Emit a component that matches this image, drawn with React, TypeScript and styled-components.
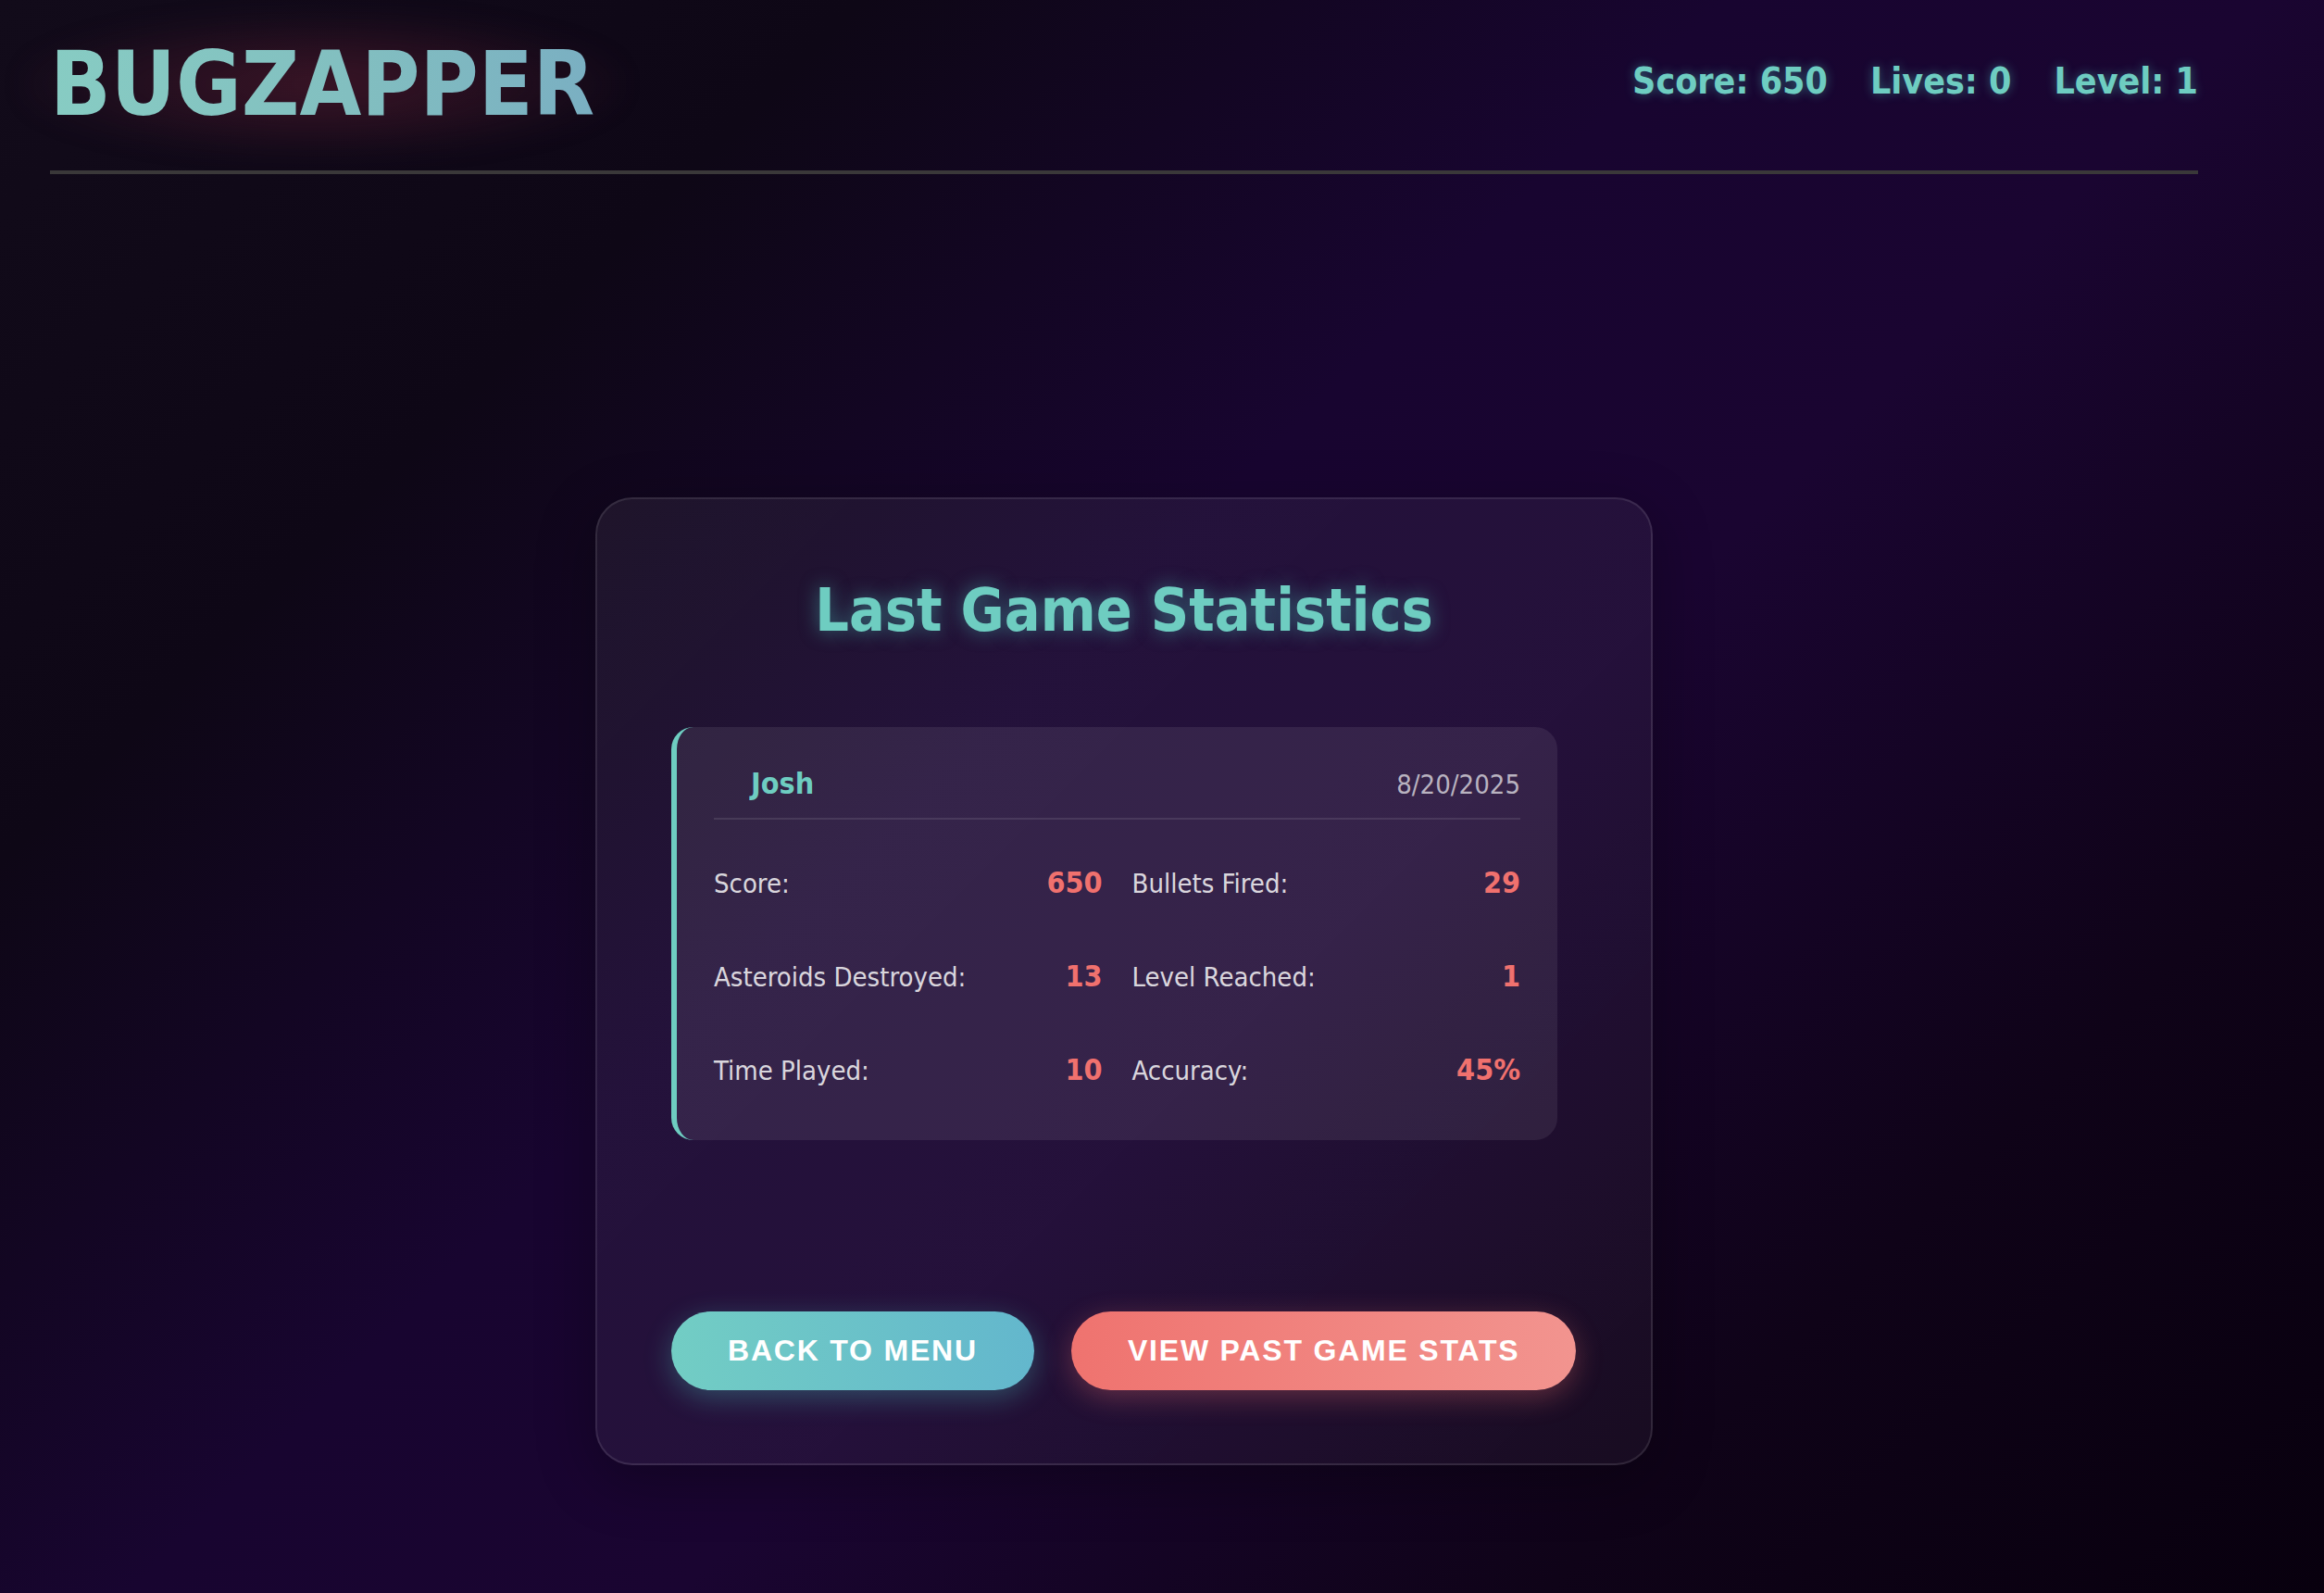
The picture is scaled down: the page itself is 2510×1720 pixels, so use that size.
import React from "react";
import styled, { createGlobalStyle, css } from "styled-components";

const GlobalStyle = createGlobalStyle`
  html, body {
    margin: 0;
    padding: 0;
  }
  body {
    min-height: 1720px;
    background: linear-gradient(
      135deg,
      #120b1a 0%,
      #0e0716 22%,
      #180530 44%,
      #1a0531 58%,
      #0f0318 80%,
      #08000e 100%
    );
    font-family: "DejaVu Sans Condensed", "DejaVu Sans", sans-serif;
    font-stretch: condensed;
    color: #ffffff;
  }
`;

const Page = styled.div`
  width: 2320px;
  margin-left: 54px;
  min-height: 1720px;
`;

const Header = styled.header`
  display: flex;
  align-items: center;
  justify-content: space-between;
  padding: 35px 0 37px;
  border-bottom: 4px solid #3a3839;
`;

const Logo = styled.h1`
  position: relative;
  margin: 0;
  font-size: 96px;
  line-height: 112px;
  font-weight: 700;
  background: linear-gradient(90deg, #87ccc3 0%, #82bfc0 55%, #7aafc2 100%);
  -webkit-background-clip: text;
  background-clip: text;
  -webkit-text-fill-color: transparent;
  color: transparent;

  &::before {
    content: "";
    position: absolute;
    inset: -20px -30px;
    z-index: -1;
    border-radius: 60px;
    background: radial-gradient(
      ellipse at center,
      rgba(110, 35, 55, 0.45) 0%,
      rgba(90, 30, 50, 0.25) 45%,
      rgba(60, 20, 40, 0) 75%
    );
    filter: blur(12px);
  }
`;

const Hud = styled.div`
  display: flex;
  gap: 46px;
  padding-bottom: 7px;
`;

const HudItem = styled.span`
  font-size: 39px;
  font-weight: 700;
  color: #6ecdc1;
  text-shadow: 0 0 12px rgba(78, 205, 196, 0.45);
`;

const Main = styled.main`
  display: flex;
  justify-content: center;
  padding-top: 349px;
`;

const Panel = styled.section`
  width: 1142px;
  box-sizing: border-box;
  padding: 82px 80px 79px;
  border: 2px solid rgba(255, 255, 255, 0.1);
  border-radius: 40px;
  background: linear-gradient(
    135deg,
    rgba(255, 255, 255, 0.06) 0%,
    rgba(255, 255, 255, 0.05) 50%,
    rgba(255, 255, 255, 0.04) 100%
  );
  box-shadow: 0 16px 64px rgba(0, 0, 0, 0.3);
`;

const PanelTitle = styled.h2`
  margin: 0 0 88px;
  text-align: center;
  font-size: 64px;
  line-height: 76px;
  font-weight: 700;
  color: #6ecdc1;
  text-shadow: 0 0 20px rgba(78, 205, 196, 0.5);
`;

const GameCard = styled.article`
  width: 957px;
  box-sizing: border-box;
  padding: 42px 40px 26px;
  border-left: 6px solid #6ecdc1;
  border-radius: 24px;
  background: rgba(255, 255, 255, 0.08);
`;

const CardHeader = styled.div`
  display: flex;
  align-items: baseline;
  justify-content: space-between;
  padding-bottom: 18px;
  border-bottom: 2px solid rgba(255, 255, 255, 0.1);
`;

const PlayerName = styled.span`
  padding-left: 40px;
  font-size: 32px;
  line-height: 38px;
  font-weight: 700;
  color: #6ecdc1;
`;

const GameDate = styled.span`
  font-size: 29px;
  color: rgba(255, 255, 255, 0.66);
`;

const StatGrid = styled.div`
  display: grid;
  grid-template-columns: 1fr 1fr;
  column-gap: 32px;
  margin-top: 18px;
`;

const Stat = styled.div`
  display: flex;
  align-items: baseline;
  justify-content: space-between;
  padding: 32px 0;
  line-height: 1.15;
`;

const StatLabel = styled.span`
  font-size: 29px;
  color: rgba(255, 255, 255, 0.84);
`;

const StatValue = styled.span`
  font-size: 32px;
  font-weight: 700;
  color: #f0716e;
`;

const ButtonRow = styled.div`
  display: flex;
  gap: 40px;
  margin-top: 185px;
`;

const ActionButton = styled.button<{ $variant: "primary" | "secondary" }>`
  flex-shrink: 0;
  white-space: nowrap;
  border: none;
  border-radius: 999px;
  padding: 24px 61px;
  font-family: "Liberation Sans", Arial, sans-serif;
  font-size: 32px;
  line-height: 37px;
  font-weight: 700;
  letter-spacing: 1.8px;
  text-transform: uppercase;
  color: #ffffff;
  cursor: pointer;
  ${({ $variant }) =>
    $variant === "primary"
      ? css`
          background: linear-gradient(90deg, #72cdc4 0%, #63b7cd 100%);
          box-shadow: 0 8px 30px rgba(78, 205, 196, 0.32);
        `
      : css`
          background: linear-gradient(90deg, #ef736f 0%, #f2948f 100%);
          box-shadow: 0 8px 30px rgba(240, 112, 110, 0.32);
        `}
`;

const stats: { label: string; value: string }[] = [
  { label: "Score:", value: "650" },
  { label: "Bullets Fired:", value: "29" },
  { label: "Asteroids Destroyed:", value: "13" },
  { label: "Level Reached:", value: "1" },
  { label: "Time Played:", value: "10" },
  { label: "Accuracy:", value: "45%" },
];

export default function App() {
  return (
    <>
      <GlobalStyle />
      <Page>
        <Header>
          <Logo>BUGZAPPER</Logo>
          <Hud>
            <HudItem>Score: 650</HudItem>
            <HudItem>Lives: 0</HudItem>
            <HudItem>Level: 1</HudItem>
          </Hud>
        </Header>
        <Main>
          <Panel>
            <PanelTitle>Last Game Statistics</PanelTitle>
            <GameCard>
              <CardHeader>
                <PlayerName>Josh</PlayerName>
                <GameDate>8/20/2025</GameDate>
              </CardHeader>
              <StatGrid>
                {stats.map((s) => (
                  <Stat key={s.label}>
                    <StatLabel>{s.label}</StatLabel>
                    <StatValue>{s.value}</StatValue>
                  </Stat>
                ))}
              </StatGrid>
            </GameCard>
            <ButtonRow>
              <ActionButton $variant="primary">Back to Menu</ActionButton>
              <ActionButton $variant="secondary">View Past Game Stats</ActionButton>
            </ButtonRow>
          </Panel>
        </Main>
      </Page>
    </>
  );
}
